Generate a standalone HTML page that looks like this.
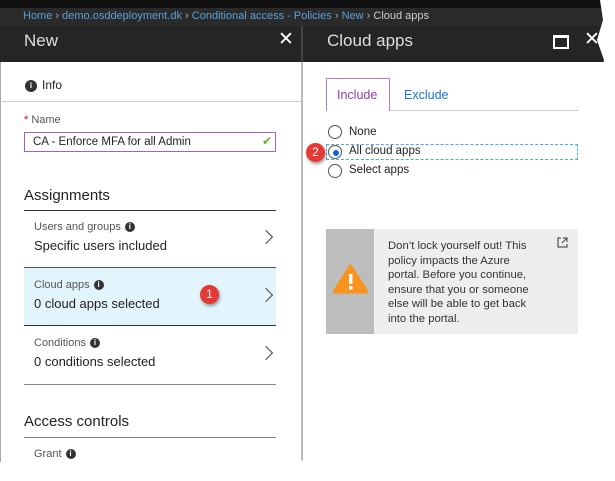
<!DOCTYPE html><html><head><style>
body{margin:0;width:615px;height:481px;background:#fff;overflow:hidden;font-family:"Liberation Sans",sans-serif;position:relative}
#w{position:absolute;left:0;top:0;width:610px;height:470px;background:#fff;clip-path:polygon(0 0,600px 0,603px 20px,597px 40px,604px 60px,598px 90px,604px 120px,598px 150px,603px 180px,597px 210px,604px 240px,598px 270px,603px 300px,597px 330px,604px 360px,598px 390px,603px 420px,599px 450px,602px 462px,560px 466px,520px 461px,480px 467px,440px 462px,400px 466px,360px 461px,320px 466px,300px 460px,270px 466px,230px 461px,190px 466px,150px 461px,110px 467px,70px 461px,30px 466px,0 462px)}
.a{position:absolute}
.t{position:absolute;white-space:nowrap}
.ln{position:absolute;height:1px;background:#333}
.chev{position:absolute;width:9px;height:9px;border-right:1.3px solid #444;border-top:1.3px solid #444;transform:rotate(45deg)}
.i{display:inline-block;width:10px;height:10px;border-radius:50%;background:#333;color:#fff;font-size:8px;line-height:10px;text-align:center;font-weight:bold;vertical-align:1px;margin-left:4px}
.r{position:absolute;width:14px;height:14px;border:1.3px solid #555;border-radius:50%;background:#fff;box-sizing:border-box}
.b{position:absolute;width:19px;height:19px;border-radius:50%;background:#e53935;color:#fff;font-size:12px;text-align:center;line-height:19px;box-shadow:1px 2px 3px rgba(0,0,0,.4)}
</style></head><body>
<div id="w">
<div class="a" style="left:0;top:0;width:610px;height:8px;background:#111"></div>
<div class="a" style="left:0;top:8px;width:610px;height:18px;background:#2a2a2a"></div>
<div class="t" style="left:23px;top:10px;font-size:11px;color:#5aa0d8">Home <span style="color:#aaa">›</span> demo.osddeployment.dk <span style="color:#aaa">›</span> Conditional access - Policies <span style="color:#aaa">›</span> New <span style="color:#aaa">›</span> <span style="color:#ccc">Cloud apps</span></div>
<div class="a" style="left:0;top:26px;width:610px;height:36px;background:#252525"></div>
<div class="a" style="left:301px;top:26px;width:2px;height:440px;background:#bbb"></div>
<div class="a" style="left:301px;top:26px;width:2px;height:36px;background:#444"></div>
<div class="t" style="left:24px;top:31px;font-size:17px;color:#ddd">New</div>
<div class="t" style="left:278px;top:28px;font-size:19px;color:#fff">✕</div>
<div class="t" style="left:327px;top:31px;font-size:17px;color:#ddd">Cloud apps</div>
<div class="a" style="left:553px;top:35px;width:12px;height:9px;border:2px solid #fff;border-top-width:3px"></div>
<div class="t" style="left:584px;top:28px;font-size:19px;color:#fff">✕</div>
<div class="a" style="left:0;top:62px;width:1px;height:404px;background:#aaa"></div>
<div class="t" style="left:25px;top:78px;font-size:12px;color:#222"><span class="i" style="width:12px;height:12px;line-height:12px;margin:0 5px 0 0">i</span>Info</div>
<div class="a" style="left:0;top:101px;width:301px;height:1px;background:#ccc"></div>
<div class="t" style="left:24px;top:114px;font-size:11px;color:#555"><span style="color:#d00">*</span> Name</div>
<div class="a" style="left:24px;top:132px;width:252px;height:20px;border:1.3px solid #a45fc0;box-sizing:border-box"></div>
<div class="t" style="left:33px;top:136px;font-size:11.5px;color:#222">CA - Enforce MFA for all Admin</div>
<div class="t" style="left:262px;top:134px;font-size:12px;color:#6a3">✔</div>
<div class="t" style="left:24px;top:187px;font-size:15px;color:#222">Assignments</div>
<div class="ln" style="left:24px;top:210px;width:252px"></div>
<div class="t" style="left:34px;top:221px;font-size:11px;color:#555">Users and groups<span class="i">i</span></div>
<div class="t" style="left:34px;top:238px;font-size:13px;color:#222">Specific users included</div>
<div class="chev" style="left:261px;top:232px"></div>
<div class="ln" style="left:24px;top:267px;width:252px;background:#555"></div>
<div class="a" style="left:24px;top:268px;width:252px;height:57px;background:#e3f5fc"></div>
<div class="t" style="left:34px;top:279px;font-size:11px;color:#555">Cloud apps<span class="i">i</span></div>
<div class="t" style="left:34px;top:296px;font-size:13px;color:#222">0 cloud apps selected</div>
<div class="b" style="left:200px;top:285px">1</div>
<div class="chev" style="left:261px;top:290px"></div>
<div class="ln" style="left:24px;top:325px;width:252px"></div>
<div class="t" style="left:34px;top:337px;font-size:11px;color:#555">Conditions<span class="i">i</span></div>
<div class="t" style="left:34px;top:354px;font-size:13px;color:#222">0 conditions selected</div>
<div class="chev" style="left:261px;top:348px"></div>
<div class="ln" style="left:24px;top:384px;width:252px;background:#888"></div>
<div class="t" style="left:24px;top:413px;font-size:15px;color:#222">Access controls</div>
<div class="ln" style="left:24px;top:437px;width:252px;background:#888"></div>
<div class="t" style="left:34px;top:448px;font-size:11px;color:#555">Grant<span class="i">i</span></div>
<div class="a" style="left:326px;top:78px;width:64px;height:33px;border:1px solid #b07cc6;border-bottom:none;box-sizing:border-box"></div>
<div class="a" style="left:390px;top:110px;width:188px;height:1px;background:#ccc"></div>
<div class="t" style="left:337px;top:88px;font-size:12.5px;color:#8a3fb0">Include</div>
<div class="t" style="left:404px;top:88px;font-size:12.5px;color:#1a73d8">Exclude</div>
<div class="a" style="left:326px;top:144px;width:252px;height:16px;border:1px dashed #4aa9e0;box-sizing:border-box"></div>
<div class="r" style="left:328px;top:125px"></div><div class="t" style="left:349px;top:126px;font-size:11.5px;color:#222">None</div>
<div class="r" style="left:328px;top:145px"></div><div class="a" style="left:333px;top:150px;width:6px;height:6px;border-radius:50%;background:#1565d8"></div><div class="t" style="left:349px;top:145px;font-size:11.5px;color:#222">All cloud apps</div>
<div class="r" style="left:328px;top:164px"></div><div class="t" style="left:349px;top:164px;font-size:11.5px;color:#222">Select apps</div>
<div class="b" style="left:306px;top:143px">2</div>
<div class="a" style="left:326px;top:229px;width:48px;height:105px;background:#bdbdbd"></div>
<div class="a" style="left:374px;top:229px;width:204px;height:105px;background:#eee"></div>
<svg class="a" style="left:333px;top:264px" width="35" height="30"><polygon points="17.5,2 34,28 1,28" fill="#f7931e" stroke="#f7931e" stroke-linejoin="round" stroke-width="3"/><rect x="16" y="10" width="3.5" height="10" fill="#fff"/><rect x="16" y="22" width="3.5" height="3.5" fill="#fff"/></svg>
<div class="a" style="left:388px;top:239px;font-size:11.3px;line-height:14.5px;color:#333;width:150px">Don’t lock yourself out! This policy impacts the Azure portal. Before you continue, ensure that you or someone else will be able to get back into the portal.</div>
<svg class="a" style="left:557px;top:237px" width="11" height="11"><path d="M4 1H1V10H10V7M6 1H10V5M10 1L5 6" fill="none" stroke="#555" stroke-width="1.2"/></svg>
</div>
</body></html>
